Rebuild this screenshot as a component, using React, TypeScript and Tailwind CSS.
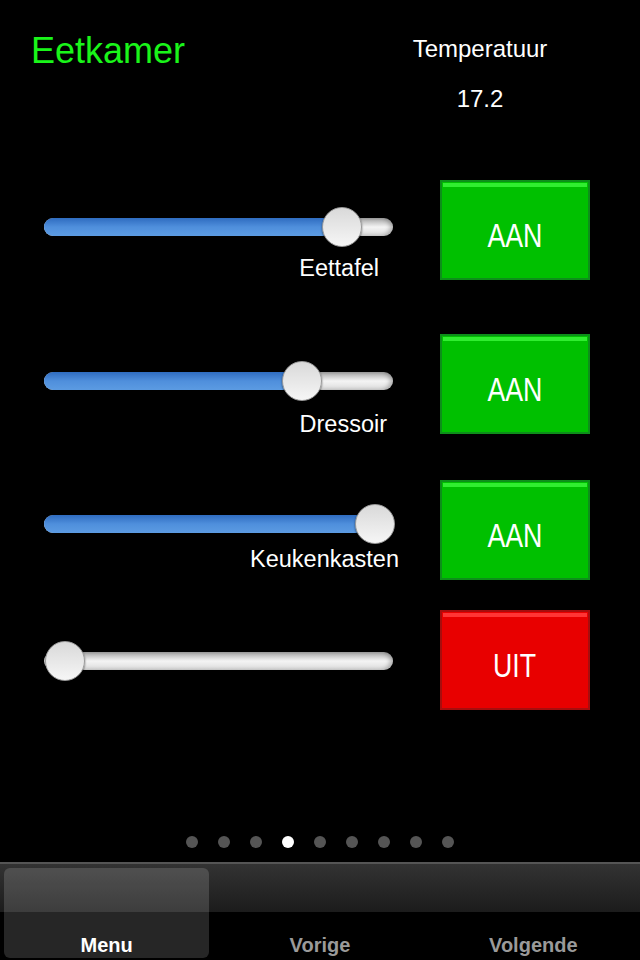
import React from 'react'

interface Row {
  label: string
  value: number
  on: boolean
  rowMt: string
  sliderMt: string
  labelMt: string
  labelPr: string
}

const ROWS: Row[] = [
  { label: 'Eettafel', value: 0.894, on: true, rowMt: 'mt-0', sliderMt: 'mt-[27px]', labelMt: 'mt-[10px]', labelPr: 'pr-[21px]' },
  { label: 'Dressoir', value: 0.763, on: true, rowMt: 'mt-[54px]', sliderMt: 'mt-[27px]', labelMt: 'mt-[12px]', labelPr: 'pr-[13px]' },
  { label: 'Keukenkasten', value: 1, on: true, rowMt: 'mt-[46px]', sliderMt: 'mt-[24px]', labelMt: 'mt-[4px]', labelPr: 'pr-[1px]' },
  { label: '', value: 0, on: false, rowMt: 'mt-[30px]', sliderMt: 'mt-[31px]', labelMt: 'mt-0', labelPr: 'pr-0' },
]

const TABS = ['Menu', 'Vorige', 'Volgende']

function Slider({ value }: { value: number }) {
  // thumb left travels from 1px to 311px inside a 352px wide box
  const thumbLeft = 1 + value * 310
  const fill = value > 0 ? thumbLeft + 20 : 0
  return (
    <div className="relative h-[40px] w-[352px]">
      <div className="absolute left-0 top-[11px] h-[18px] w-[349px] overflow-hidden rounded-full bg-gradient-to-b from-[#a9a9a9] via-[#f4f4f4] to-[#dcdcdc] shadow-[inset_-3px_0_4px_rgba(0,0,0,0.25)]">
        <div
          className="h-full bg-gradient-to-b from-[#2f6cc0] via-[#4f8fdc] to-[#5c9be2]"
          style={{ width: fill }}
        />
      </div>
      <div
        className="absolute top-0 h-[40px] w-[40px] rounded-full border border-[#9a9a9a] bg-gradient-to-b from-[#d9d9d9] to-[#f6f6f6] shadow-[0_1px_2px_rgba(0,0,0,0.6)]"
        style={{ left: thumbLeft }}
      />
    </div>
  )
}

function ToggleButton({ on }: { on: boolean }) {
  return (
    <div
      className={`flex h-[100px] w-[150px] flex-col border-2 ${
        on ? 'border-[#0d8f1a] bg-[#00c000]' : 'border-[#a80d0d] bg-[#e80000]'
      }`}
    >
      <div className={`mx-px mt-px h-[4px] ${on ? 'bg-[#30ee30]' : 'bg-[#ff3535]'}`} />
      <div className="flex flex-1 items-center justify-center pt-[5px]">
        <span className="scale-x-[0.81] text-[33px] leading-[33px] text-white">{on ? 'AAN' : 'UIT'}</span>
      </div>
    </div>
  )
}

export default function App() {
  return (
    <div className="flex h-[960px] w-[640px] flex-col bg-black font-['Liberation_Sans',Arial,sans-serif]">
      {/* Header */}
      <div className="flex h-[180px] items-start">
        <h1 className="ml-[31px] mt-[33px] text-[36px] leading-[36px] text-[#1af51a]">Eetkamer</h1>
        <div className="ml-auto mr-[60px] mt-[37px] flex w-[200px] flex-col items-center text-white">
          <p className="text-[24px] leading-[24px]">Temperatuur</p>
          <p className="mt-[26px] text-[24px] leading-[24px]">17.2</p>
        </div>
      </div>

      {/* Dimmer rows */}
      <div className="flex flex-col">
        {ROWS.map((row, i) => (
          <div key={i} className={`flex h-[100px] items-start ${row.rowMt}`}>
            <div className="flex w-[440px] flex-col pl-[44px]">
              <div className={row.sliderMt}>
                <Slider value={row.value} />
              </div>
              {row.label && (
                <p className={`w-[356px] text-right text-[23.5px] leading-[23px] text-white ${row.labelMt} ${row.labelPr}`}>
                  {row.label}
                </p>
              )}
            </div>
            <ToggleButton on={row.on} />
          </div>
        ))}
      </div>

      {/* Page dots */}
      <div className="mt-auto mb-[14px] flex justify-center gap-[20px]">
        {Array.from({ length: 9 }).map((_, i) => (
          <span key={i} className={`h-[12px] w-[12px] rounded-full ${i === 3 ? 'bg-white' : 'bg-[#555555]'}`} />
        ))}
      </div>

      {/* Tab bar */}
      <div className="relative h-[98px] border-t-2 border-[#555555] bg-black">
        <div className="absolute inset-x-0 top-0 h-[48px] bg-gradient-to-b from-[#333333] to-[#1c1c1c]" />
        <div className="relative flex h-full">
          {TABS.map((tab, i) => (
            <div key={tab} className="flex flex-1 px-[4px] pb-[2px] pt-[4px]">
              <div
                className={`flex flex-1 items-end justify-center rounded-[6px] pb-[3px] ${
                  i === 0 ? 'bg-white/15' : ''
                }`}
              >
                <span
                  className={`text-[20px] font-bold leading-[20px] ${i === 0 ? 'text-white' : 'text-[#9a9a9a]'}`}
                >
                  {tab}
                </span>
              </div>
            </div>
          ))}
        </div>
      </div>
    </div>
  )
}
